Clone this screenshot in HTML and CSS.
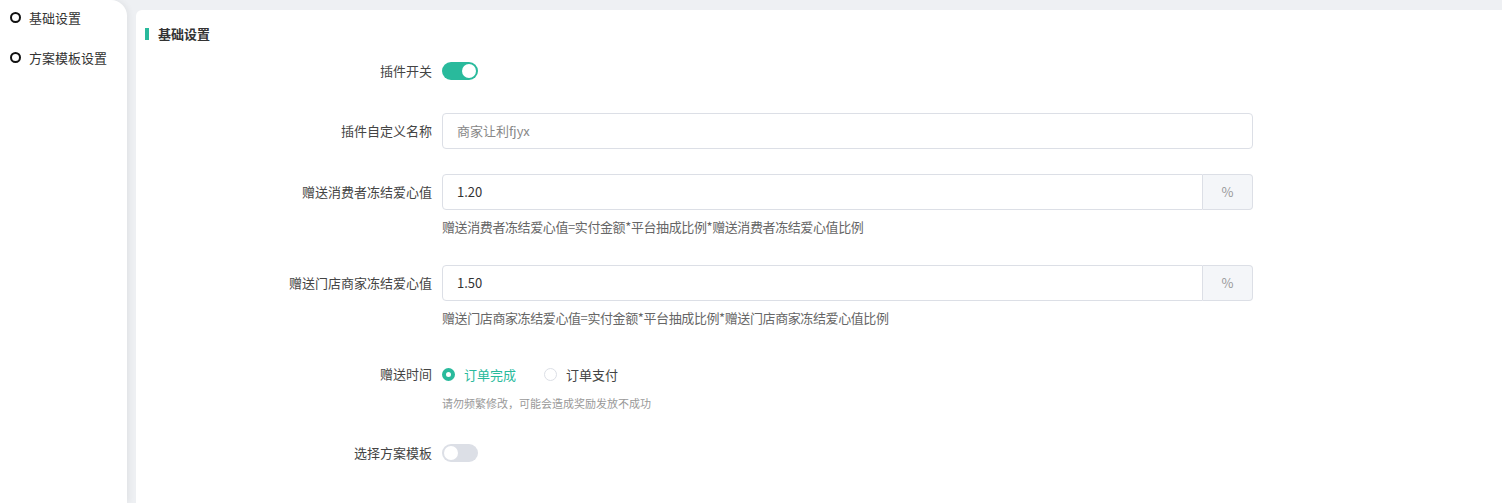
FILE: index.html
```html
<!DOCTYPE html>
<html>
    <head>
        <meta charset="utf-8">
        <link rel="stylesheet" href="styles.css">
    </head>
    <body>
        <div class="layout">
            <div class="side">
                <div class="side-list">
                    <div class="side-item"><span class="ring"></span>基础设置</div>
                    <div class="side-item"><span class="ring"></span>方案模板设置</div>
                </div>
            </div>
            <div class="card">
                <div class="card-title">基础设置</div>
                <div class="form">
                    <div class="form-item">
                        <div class="label">插件开关</div>
                        <div class="control">
                            <span class="switch switch-on"></span>
                        </div>
                    </div>
                    <div class="form-item name-item">
                        <div class="label">插件自定义名称</div>
                        <div class="control">
                            <div class="input"><span class="placeholder">商家让利fjyx</span></div>
                        </div>
                    </div>
                    <div class="form-item has-help">
                        <div class="label">赠送消费者冻结爱心值</div>
                        <div class="control">
                            <div class="input-group">
                                <div class="input">1.20</div>
                                <div class="addon">%</div>
                            </div>
                            <div class="help">赠送消费者冻结爱心值=实付金额*平台抽成比例*赠送消费者冻结爱心值比例</div>
                        </div>
                    </div>
                    <div class="form-item has-help">
                        <div class="label">赠送门店商家冻结爱心值</div>
                        <div class="control">
                            <div class="input-group">
                                <div class="input">1.50</div>
                                <div class="addon">%</div>
                            </div>
                            <div class="help">赠送门店商家冻结爱心值=实付金额*平台抽成比例*赠送门店商家冻结爱心值比例</div>
                        </div>
                    </div>
                    <div class="form-item radio-item">
                        <div class="label">赠送时间</div>
                        <div class="control">
                            <div class="radios">
                                <span class="radio radio-checked"><span class="dot"></span>订单完成</span>
                                <span class="radio"><span class="dot"></span>订单支付</span>
                            </div>
                            <div class="tip">请勿频繁修改，可能会造成奖励发放不成功</div>
                        </div>
                    </div>
                    <div class="form-item">
                        <div class="label">选择方案模板</div>
                        <div class="control">
                            <span class="switch"></span>
                        </div>
                    </div>
                </div>
            </div>
        </div>
    </body>
</html>
```

FILE: styles.css
```css
body {
    margin: 0;
    background-color: #eef0f3;
    font-family: "Noto Sans CJK SC", "Noto Sans", sans-serif;
    font-size: 13px;
    color: #333;
    overflow: hidden;
}

.layout {
    display: flex;
    height: 503px;
}

.side {
    width: 127px;
    background-color: #fff;
    border-top-right-radius: 16px;
    box-shadow: 2px 0 6px rgba(0, 0, 0, 0.06);
    flex-shrink: 0;
}

.side-list {
    margin-top: -3px;
}

.side-item {
    display: flex;
    align-items: center;
    height: 40px;
    padding-left: 10px;
    color: #333;
}

.ring {
    width: 7px;
    height: 7px;
    border: 2px solid #111;
    border-radius: 50%;
    margin-right: 8px;
}

.card {
    flex: 1;
    margin: 10px 0 0 9px;
    background-color: #fff;
    border-top-left-radius: 6px;
}

.card-title {
    display: flex;
    align-items: center;
    margin: 14px 0 0 9px;
    line-height: 20px;
    font-weight: bold;
    color: #333;
}

.card-title::before {
    content: "";
    width: 4px;
    height: 12px;
    background-color: #29ba9c;
    margin-right: 9px;
}

.form {
    margin-top: 9px;
}

.form-item {
    display: flex;
    margin-bottom: 24px;
}

.form-item.name-item {
    margin-bottom: 25px;
}

.form-item.has-help {
    margin-bottom: 26px;
}

.form-item.radio-item {
    margin-bottom: 22px;
}

.label {
    width: 296px;
    flex-shrink: 0;
    text-align: right;
    line-height: 36px;
    color: #444;
}

.control {
    margin-left: 10px;
    width: 811px;
}

.switch {
    display: inline-block;
    position: relative;
    width: 36px;
    height: 18px;
    border-radius: 9px;
    background-color: #dcdfe6;
    margin-top: 9px;
}

.switch::after {
    content: "";
    position: absolute;
    top: 2px;
    left: 2px;
    width: 14px;
    height: 14px;
    border-radius: 50%;
    background-color: #fff;
}

.switch-on {
    background-color: #29ba9c;
}

.switch-on::after {
    left: 20px;
}

.input {
    height: 34px;
    line-height: 34px;
    border: 1px solid #dcdfe6;
    border-radius: 4px;
    padding-left: 14px;
    color: #333;
}

.placeholder {
    color: #888;
}

.input-group {
    display: flex;
}

.input-group .input {
    flex: 1;
    border-radius: 4px 0 0 4px;
}

.addon {
    width: 49px;
    height: 34px;
    line-height: 34px;
    text-align: center;
    background-color: #f4f6f9;
    border: 1px solid #dcdfe6;
    border-left: none;
    border-radius: 0 4px 4px 0;
    color: #999;
}

.help {
    margin-top: 5px;
    line-height: 24px;
    color: #666;
    letter-spacing: -0.4px;
}

.radios {
    display: flex;
    align-items: center;
    height: 36px;
}

.radio {
    display: flex;
    align-items: center;
    margin-right: 28px;
    color: #444;
}

.radio .dot {
    width: 11px;
    height: 11px;
    border: 1px solid #dcdfe6;
    border-radius: 50%;
    margin-right: 9px;
    background-color: #fff;
    box-sizing: content-box;
}

.radio-checked {
    color: #29ba9c;
}

.radio-checked .dot {
    width: 5px;
    height: 5px;
    border: 4px solid #29ba9c;
    background-color: #fff;
}

.tip {
    margin-top: 1px;
    line-height: 20px;
    font-size: 11px;
    color: #999;
}
```
